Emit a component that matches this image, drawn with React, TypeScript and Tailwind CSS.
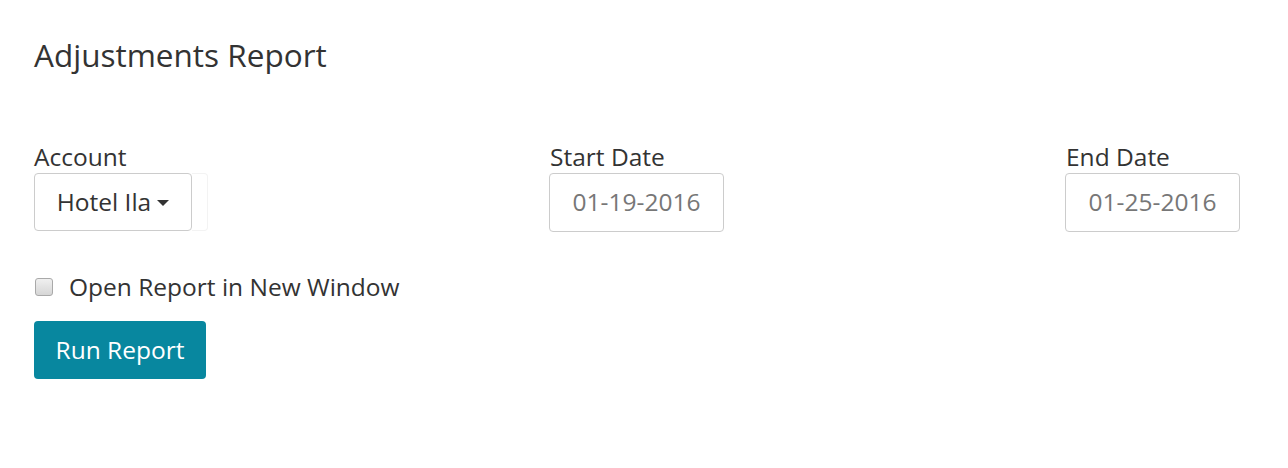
import React from "react";

const font = { fontFamily: '"Open Sans", "Liberation Sans", sans-serif' };

export default function App() {
  return (
    <div className="w-[1288px] h-[468px] overflow-hidden bg-white text-[#333]" style={font}>
      <div className="pl-[34px] pt-[34px]">
        <h1 className="text-[31.5px] leading-[42px] font-normal">Adjustments Report</h1>

        <div className="mt-[65px] grid grid-cols-[516px_516px_516px]">
          <div>
            <label className="block text-[24.5px] leading-[32px]">Account</label>
            <div className="flex">
              <button className="h-[58px] w-[158px] border border-[#ccc] rounded-[4px] bg-white flex items-center justify-center gap-[6px] text-[24.5px] text-[#333]">
                <span>Hotel Ila</span>
                <span className="inline-block w-0 h-0 border-l-[6px] border-r-[6px] border-t-[6px] border-l-transparent border-r-transparent border-t-[#333] mt-[2px]" />
              </button>
              <div className="h-[58px] w-[16px] border border-l-0 border-[#f3f3f3] rounded-r-[4px]" />
            </div>
          </div>
          <div>
            <label className="block text-[24.5px] leading-[32px]">Start Date</label>
            <div className="h-[59px] w-[175px] -ml-px border border-[#ccc] rounded-[4px] flex items-center justify-center text-[24.5px] text-[#777]">
              01-19-2016
            </div>
          </div>
          <div>
            <label className="block text-[24.5px] leading-[32px]">End Date</label>
            <div className="h-[59px] w-[175px] -ml-px border border-[#ccc] rounded-[4px] flex items-center justify-center text-[24.5px] text-[#777]">
              01-25-2016
            </div>
          </div>
        </div>

        <div className="mt-[39px] flex items-center h-[32px]">
          <input
            type="checkbox"
            className="appearance-none w-[18px] h-[18px] ml-px rounded-[3px] border border-[#a9a9a9] bg-gradient-to-b from-[#f0f0f0] to-[#d6d6d6]"
          />
          <span className="ml-[16px] text-[24.5px] leading-[32px]">Open Report in New Window</span>
        </div>

        <button className="mt-[18px] h-[58px] w-[172px] rounded-[4px] bg-[#08879f] text-white text-[24.5px]">
          Run Report
        </button>
      </div>
    </div>
  );
}
